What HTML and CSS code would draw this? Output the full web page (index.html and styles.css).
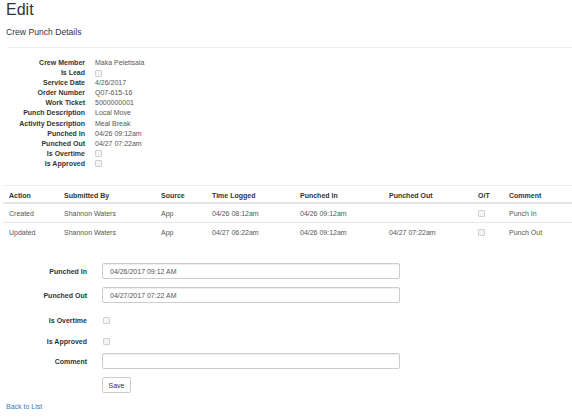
FILE: index.html
```html
<!DOCTYPE html>
<html>
<head>
<meta charset="utf-8">
<link rel="stylesheet" href="styles.css">
</head>
<body>
<div class="page">
  <h2 class="title">Edit</h2>
  <h4 class="subtitle">Crew Punch Details</h4>
  <hr class="rule">
  <dl class="details">
    <dt>Crew Member</dt><dd>Maka Peletisala</dd>
    <dt>Is Lead</dt><dd><span class="cb"></span></dd>
    <dt>Service Date</dt><dd>4/26/2017</dd>
    <dt>Order Number</dt><dd>Q07-615-16</dd>
    <dt>Work Ticket</dt><dd>5000000001</dd>
    <dt>Punch Description</dt><dd>Local Move</dd>
    <dt>Activity Description</dt><dd>Meal Break</dd>
    <dt>Punched In</dt><dd>04/26 09:12am</dd>
    <dt>Punched Out</dt><dd>04/27 07:22am</dd>
    <dt>Is Overtime</dt><dd><span class="cb"></span></dd>
    <dt>Is Approved</dt><dd><span class="cb"></span></dd>
  </dl>
  <table class="log">
    <colgroup>
      <col class="c1"><col class="c2"><col class="c3"><col class="c4"><col class="c5"><col class="c6"><col class="c7"><col class="c8">
    </colgroup>
    <thead>
      <tr><th>Action</th><th>Submitted By</th><th>Source</th><th>Time Logged</th><th>Punched In</th><th>Punched Out</th><th>O/T</th><th>Comment</th></tr>
    </thead>
    <tbody>
      <tr><td>Created</td><td>Shannon Waters</td><td>App</td><td>04/26 08:12am</td><td>04/26 09:12am</td><td></td><td><span class="cb"></span></td><td>Punch In</td></tr>
      <tr><td>Updated</td><td>Shannon Waters</td><td>App</td><td>04/27 06:22am</td><td>04/26 09:12am</td><td>04/27 07:22am</td><td><span class="cb"></span></td><td>Punch Out</td></tr>
    </tbody>
  </table>
  <form class="form">
    <div class="group g-input">
      <label class="lbl">Punched In</label>
      <input class="field" type="text" value="04/26/2017 09:12 AM">
    </div>
    <div class="group g-input">
      <label class="lbl">Punched Out</label>
      <input class="field" type="text" value="04/27/2017 07:22 AM">
    </div>
    <div class="group g-check">
      <label class="lbl">Is Overtime</label>
      <span class="cb form-cb"></span>
    </div>
    <div class="group g-check">
      <label class="lbl">Is Approved</label>
      <span class="cb form-cb"></span>
    </div>
    <div class="group g-input">
      <label class="lbl">Comment</label>
      <input class="field" type="text" value="">
    </div>
    <div class="group g-btn">
      <span class="lbl"></span>
      <button class="btn" type="button">Save</button>
    </div>
  </form>
  <a class="back" href="#">Back to List</a>
</div>
</body>
</html>
```

FILE: styles.css
```css
html, body {
  margin: 0;
  padding: 0;
  background: #fff;
}
body {
  font-family: "Liberation Sans", Arial, sans-serif;
  font-size: 7px;
  color: #333;
}
.page {
  width: 572px;
}
.title {
  margin: 0;
  padding-left: 6px;
  font-size: 16px;
  font-weight: normal;
  line-height: 20px;
  height: 20px;
  color: #333;
}
.subtitle {
  margin: 6px 0 0 0;
  padding-left: 6px;
  font-size: 8.6px;
  font-weight: normal;
  line-height: 12px;
  height: 12px;
  color: #333;
}
.rule {
  margin: 9px 0 0 8px;
  border: 0;
  border-top: 1px solid #eee;
  height: 0;
}
.details {
  display: grid;
  grid-template-columns: 85px auto;
  column-gap: 10px;
  grid-auto-rows: 10.1px;
  margin: 10px 0 0 0;
  line-height: 10.1px;
}
.details dt {
  font-weight: bold;
  text-align: right;
  white-space: nowrap;
}
.details dd {
  margin: 0;
  display: flex;
  align-items: center;
  color: #555;
}
.cb {
  display: inline-block;
  width: 5px;
  height: 5px;
  border: 1px solid #cfcfcf;
  border-radius: 1px;
  background: #f4f4f4;
}
.log {
  margin: 16px 0 0 3px;
  width: 569px;
  border-collapse: collapse;
  table-layout: fixed;
}
.c1 { width: 55px; }
.c2 { width: 97px; }
.c3 { width: 51px; }
.c4 { width: 88px; }
.c5 { width: 89px; }
.c6 { width: 89px; }
.c7 { width: 31px; }
.c8 { width: 69px; }
.log th, .log td {
  padding: 3.5px 6px;
  line-height: 11px;
  text-align: left;
  vertical-align: middle;
  white-space: nowrap;
}
.log th {
  font-weight: bold;
  border-top: 1px solid #eee;
  border-bottom: 2px solid #e6e6e6;
  padding-top: 4px;
  padding-bottom: 1px;
}
.log td {
  border-top: 1px solid #e6e6e6;
  color: #555;
}
.log tbody tr:first-child td {
  border-top: 0;
}
.log td .cb {
  vertical-align: middle;
}
.form {
  margin: 22px 0 0 0;
}
.group {
  display: flex;
  align-items: center;
  column-gap: 15px;
}
.g-input { height: 16px; margin-bottom: 8px; }
.g-check { height: 18px; margin-bottom: 3px; }
.g-btn { height: 16px; }
.lbl {
  width: 87px;
  text-align: right;
  font-weight: bold;
  flex: none;
}
.field {
  box-sizing: border-box;
  width: 298px;
  height: 16px;
  margin: 0;
  padding: 0 7px;
  font-family: "Liberation Sans", Arial, sans-serif;
  font-size: 7px;
  color: #555;
  background: #fff;
  border: 1px solid #ccc;
  border-radius: 2px;
  box-shadow: inset 0 1px 1px rgba(0,0,0,0.07);
  outline: none;
}
.form-cb {
  margin-left: 1px;
}
.btn {
  box-sizing: border-box;
  width: 29px;
  height: 16px;
  padding: 0;
  margin: 0;
  font-family: "Liberation Sans", Arial, sans-serif;
  font-size: 7px;
  color: #333;
  background: #fff;
  border: 1px solid #ccc;
  border-radius: 2px;
}
.back {
  display: block;
  margin: 9px 0 0 6px;
  line-height: 10px;
  color: #337ab7;
  text-decoration: none;
  width: max-content;
}
```
